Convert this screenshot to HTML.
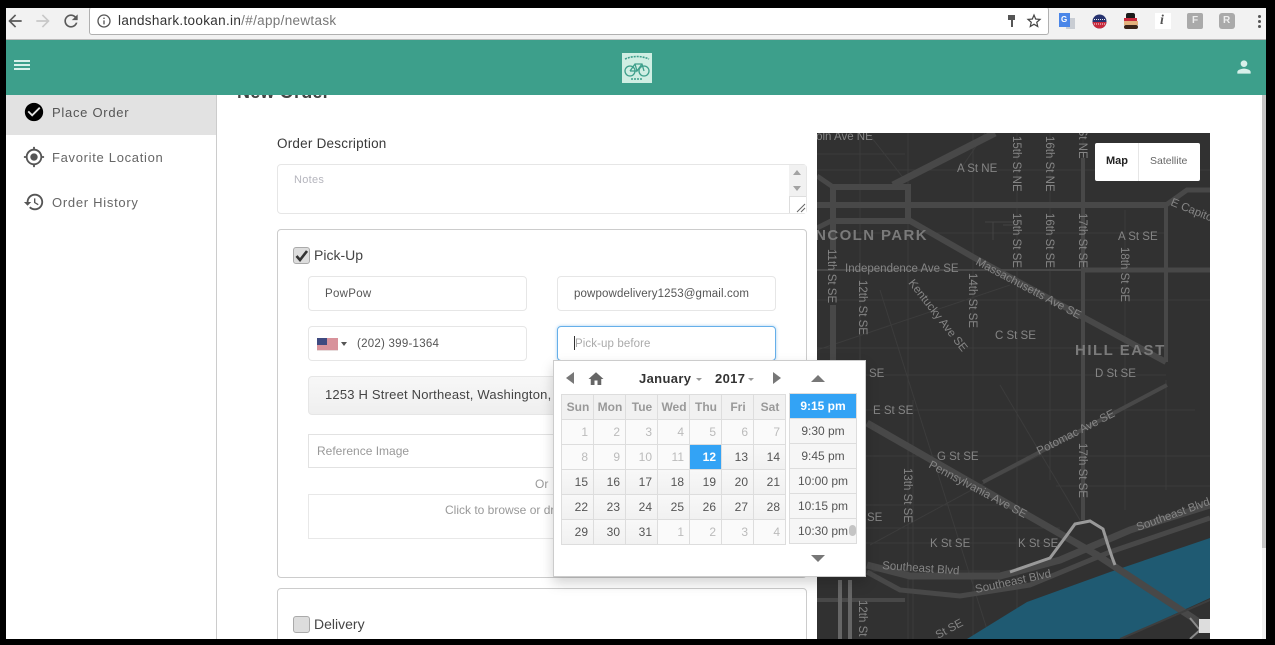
<!DOCTYPE html>
<html><head><meta charset="utf-8"><style>
html,body{margin:0;padding:0;width:1275px;height:645px;overflow:hidden;background:#000;font-family:"Liberation Sans",sans-serif}
.a{position:absolute}
.t{position:absolute;white-space:nowrap}
.box{position:absolute;box-sizing:border-box;border:1px solid #e6e6e6;border-radius:4px;background:#fff}
#cal div.c{position:absolute;box-sizing:border-box;width:33px;height:26px;border:1px solid #ddd;background:linear-gradient(#f8f8f8,#f1f1f1);font-size:12px;line-height:24px;text-align:right;padding-right:5px;color:#555}
#cal div.h{text-align:center;padding:0 0 0 1px;font-weight:bold;color:#999;background:#f1f1f1}
#cal div.o{color:#bbb;background:#fafafa}
#cal div.s{background:#33a3f5;color:#fff;font-weight:bold;border-color:#ddd}
#cal div.m{position:absolute;box-sizing:border-box;left:235px;width:68px;height:26px;border:1px solid #ddd;background:#f6f6f6;font-size:12px;line-height:24px;text-align:center;color:#555}
svg text{font-family:"Liberation Sans",sans-serif;font-size:11.5px;fill:#858585}
</style></head><body>
<div class="a" id="page" style="left:6px;top:8px;width:1260px;height:631px;background:#fff;overflow:hidden">
<div style="position:absolute;left:-6px;top:-8px;width:1275px;height:645px">

<!-- content -->
<div class="t" style="left:237px;top:80px;font-size:18px;line-height:24px;font-weight:bold;color:#444;letter-spacing:.2px">New Order</div>

<!-- sidebar -->
<div class="a" style="left:6px;top:95px;width:210px;height:544px;background:#fff;border-right:1px solid #ccc"></div>
<div class="a" style="left:6px;top:95px;width:210px;height:40px;background:#e2e2e2"></div>
<svg class="a" style="left:23px;top:101px" width="22" height="22" viewBox="0 0 24 24"><path fill="#000" d="M12 2C6.48 2 2 6.48 2 12s4.48 10 10 10 10-4.48 10-10S17.52 2 12 2zm-2 15l-5-5 1.41-1.41L10 14.17l7.59-7.59L19 8l-9 9z"/></svg>
<svg class="a" style="left:23px;top:146px" width="22" height="22" viewBox="0 0 24 24"><path fill="#555" d="M12 8c-2.21 0-4 1.79-4 4s1.79 4 4 4 4-1.79 4-4-1.79-4-4-4zm8.94 3c-.46-4.17-3.77-7.48-7.94-7.94V1h-2v2.06C6.83 3.52 3.52 6.83 3.06 11H1v2h2.06c.46 4.17 3.77 7.48 7.94 7.94V23h2v-2.06c4.17-.46 7.48-3.77 7.94-7.94H23v-2h-2.06zM12 19c-3.87 0-7-3.13-7-7s3.13-7 7-7 7 3.13 7 7-3.13 7-7 7z"/></svg>
<svg class="a" style="left:23px;top:191px" width="22" height="22" viewBox="0 0 24 24"><path fill="#555" d="M13 3c-4.97 0-9 4.03-9 9H1l3.89 3.89.07.14L9 12H6c0-3.87 3.13-7 7-7s7 3.13 7 7-3.13 7-7 7c-1.93 0-3.68-.79-4.94-2.06l-1.42 1.42C8.27 19.99 10.51 21 13 21c4.97 0 9-4.03 9-9s-4.03-9-9-9zm-1 5v5l4.28 2.54.72-1.21-3.5-2.08V8H12z"/></svg>
<div class="t" style="left:52px;top:105px;font-size:13px;line-height:15px;color:#555;letter-spacing:.72px">Place Order</div>
<div class="t" style="left:52px;top:150px;font-size:13px;line-height:15px;color:#666;letter-spacing:.69px">Favorite Location</div>
<div class="t" style="left:52px;top:195px;font-size:13px;line-height:15px;color:#666;letter-spacing:.72px">Order History</div>

<!-- form -->
<div class="t" style="left:277px;top:136px;font-size:13.5px;line-height:15px;color:#3a3a3a;letter-spacing:.22px">Order Description</div>
<div class="box" style="left:277px;top:164px;width:530px;height:50px"></div>
<div class="t" style="left:294px;top:174px;font-size:11px;line-height:13px;color:#b5b5bd;letter-spacing:.3px">Notes</div>
<div class="a" style="left:789px;top:165px;width:17px;height:32px;background:#f1f1f1"></div>
<div class="a" style="left:793px;top:170px;width:0;height:0;border-left:4px solid transparent;border-right:4px solid transparent;border-bottom:5px solid #a3a3a3"></div>
<div class="a" style="left:793px;top:186px;width:0;height:0;border-left:4px solid transparent;border-right:4px solid transparent;border-top:5px solid #a3a3a3"></div>
<div class="a" style="left:789px;top:196px;width:17px;height:17px;box-sizing:border-box;border-left:1px solid #ddd;border-top:1px solid #ddd;background:#fff"></div>
<svg class="a" style="left:796px;top:203px" width="10" height="10"><path d="M1 9L9 1M5 9L9 5" stroke="#666" stroke-width="1" fill="none"/></svg>

<div class="box" style="left:277px;top:229px;width:530px;height:349px;border-color:#ccc"></div>
<div class="box" style="left:277px;top:588px;width:530px;height:70px;border-color:#ccc"></div>

<div class="a" style="left:293px;top:247px;width:17px;height:17px;box-sizing:border-box;border:1px solid #aaa;border-radius:3px;background:#ddd"></div>
<svg class="a" style="left:295px;top:249px" width="13" height="13" viewBox="0 0 13 13"><path d="M1.5 7L5 11L12 2" stroke="#333" stroke-width="2.6" fill="none"/></svg>
<div class="t" style="left:314px;top:247px;font-size:14px;line-height:16px;color:#444">Pick-Up</div>

<div class="box" style="left:308px;top:276px;width:219px;height:35px"></div>
<div class="t" style="left:325px;top:287px;font-size:11.5px;line-height:14px;color:#555;letter-spacing:.3px">PowPow</div>
<div class="box" style="left:557px;top:276px;width:219px;height:35px"></div>
<div class="t" style="left:574px;top:287px;font-size:11.5px;line-height:14px;color:#555;letter-spacing:.13px">powpowdelivery1253@gmail.com</div>

<div class="box" style="left:308px;top:326px;width:219px;height:35px"></div>
<svg class="a" style="left:317px;top:338px" width="21" height="13" viewBox="0 0 21 13"><rect width="21" height="13" fill="#e8dcdc"/><path d="M0 1h21M0 3h21M0 5h21M0 7h21M0 9h21M0 11h21" stroke="#c8485a" stroke-width="1" fill="none"/><rect width="10" height="7" fill="#3f4a80"/></svg>
<div class="a" style="left:341px;top:342px;width:0;height:0;border-left:3px solid transparent;border-right:3px solid transparent;border-top:4px solid #555"></div>
<div class="t" style="left:357px;top:337px;font-size:11.5px;line-height:14px;color:#555;letter-spacing:.25px">(202) 399-1364</div>

<div class="box" style="left:557px;top:326px;width:219px;height:35px;border-color:#66afe9;box-shadow:0 0 3px rgba(102,175,233,.6)"></div>
<div class="a" style="left:574px;top:336px;width:1px;height:14px;background:#333"></div>
<div class="t" style="left:575px;top:337px;font-size:11.5px;line-height:14px;color:#aaa;letter-spacing:.1px">Pick-up before</div>

<div class="box" style="left:308px;top:376px;width:300px;height:39px;background:linear-gradient(#f7f7f7,#efefef)"></div>
<div class="t" style="left:325px;top:387px;font-size:13px;line-height:15px;color:#444;letter-spacing:.2px">1253 H Street Northeast, Washington,</div>

<div class="box" style="left:308px;top:434px;width:468px;height:34px;border-radius:0;border-color:#e2e2e2"></div>
<div class="t" style="left:317px;top:444px;font-size:12px;line-height:14px;color:#999">Reference Image</div>
<div class="t" style="left:535px;top:477px;font-size:12px;line-height:14px;color:#999">Or</div>
<div class="box" style="left:308px;top:494px;width:468px;height:45px;border-radius:0;border-color:#e8e8e8"></div>
<div class="t" style="left:445px;top:503px;font-size:12px;line-height:14px;color:#999">Click to browse or drag</div>

<div class="a" style="left:293px;top:616px;width:17px;height:17px;box-sizing:border-box;border:1px solid #aaa;border-radius:3px;background:#ddd"></div>
<div class="t" style="left:314px;top:616px;font-size:14px;line-height:16px;color:#444">Delivery</div>

<!-- map -->
<svg class="a" style="left:817px;top:133px;background:#313131" width="393" height="506" viewBox="817 133 393 506">
<g stroke="#3c3c3c" stroke-width="1" fill="none">
<path d="M817 154H905M817 170H1210M817 233H1165M817 300H1210M817 348H1166M817 375H1166M817 410H1195M817 456H1210M817 505H1000M817 528H1060M817 543H1060M817 571H1000M1056 486H1210"/>
<path d="M860 133V400M908 133V639M913 400V639M973 133V639M1017 133V640M1050 133V480M1125 210V510M1166 380V490M1083 133V300"/>
<path d="M905 180L868 133M880 290L990 639M985 133L960 170M1000 385L1080 520M870 545L990 480L1040 455M817 350L1010 285"/>
</g>
<path d="M1015 225H1003M993 222V240M1020 222H985" stroke="#444" fill="none"/>
<path d="M967 639L1027 602L1110 572L1210 538V598L1120 639Z" fill="#1f5a72"/>
<g stroke="#484848" fill="none" stroke-linecap="butt">
<path d="M817 205H1166" stroke-width="6"/>
<path d="M833 187H908V221H833Z" stroke-width="6"/>
<path d="M893 185L995 133" stroke-width="7"/>
<path d="M817 176L833 187M817 228L833 220" stroke-width="5"/>
<path d="M905 218L973 257L1083 317L1166 362" stroke-width="6"/>
<path d="M833 221V250M833 305V372" stroke-width="6"/>
<path d="M1083 158V520" stroke-width="4"/>
<path d="M1166 205V362" stroke-width="4"/>
<path d="M1083 270H1210" stroke-width="5"/>
<path d="M817 270H1083" stroke-width="2"/>
<path d="M1166 205L1187 190H1210" stroke-width="5"/>
<path d="M867 423L1097 555L1193 618L1210 630" stroke-width="7"/>
<path d="M983 482L1167 385" stroke-width="4"/>
<path d="M867 565L910 576H1000L1060 560L1130 530L1210 505" stroke-width="7"/>
<path d="M867 572L900 590L960 596L1030 585L1110 552L1210 518" stroke-width="5"/>
<path d="M817 600H905" stroke-width="4"/>
<path d="M840 639V580M850 639V580" stroke-width="4" stroke="#666"/>
<path d="M1120 639L1210 600" stroke-width="2" stroke="#3e3e3e"/>
</g>
<path d="M1010 572L1050 558L1067 535L1075 524L1090 521L1103 529L1108 545L1112 557L1115 565" stroke="#999" stroke-width="3" fill="none"/>
<path d="M1190 618L1200 630L1190 639" stroke="#8a8a8a" stroke-width="2" fill="none"/>
<rect x="1199" y="619" width="11" height="14" fill="#ddd"/>
<text x="795" y="140">Lincoln Ave NE</text>
<text x="957" y="172">A St NE</text>
<text transform="translate(1013 136) rotate(90)">15th St NE</text>
<text transform="translate(1046 136) rotate(90)">16th St NE</text>
<text transform="translate(1079 103) rotate(90)">17th St NE</text>
<text transform="translate(1013 213) rotate(90)">15th St SE</text>
<text transform="translate(1046 213) rotate(90)">16th St SE</text>
<text transform="translate(1079 213) rotate(90)">17th St SE</text>
<text transform="translate(1121 247) rotate(90)">18th St SE</text>
<text transform="translate(828 249) rotate(90)">11th St SE</text>
<text transform="translate(859 280) rotate(90)">12th St SE</text>
<text transform="translate(969 273) rotate(90)">14th St SE</text>
<text transform="translate(1079 443) rotate(90)">17th St SE</text>
<text transform="translate(904 468) rotate(90)">13th St SE</text>
<text transform="translate(859 600) rotate(90)">12th St SE</text>
<text transform="translate(1170 205) rotate(22)">E Capitol</text>
<text x="928" y="240" text-anchor="end" style="font-size:15px;letter-spacing:1.4px;font-weight:bold;fill:#7a7a7a">LINCOLN PARK</text>
<text x="1118" y="240">A St SE</text>
<text x="845" y="272">Independence Ave SE</text>
<text transform="translate(975 264) rotate(28)">Massachusetts Ave SE</text>
<text transform="translate(908 283) rotate(52)">Kentucky Ave SE</text>
<text x="995" y="339">C St SE</text>
<text x="1075" y="355" style="font-size:15px;letter-spacing:1.5px;font-weight:bold;fill:#7a7a7a">HILL EAST</text>
<text x="1095" y="377">D St SE</text>
<text x="869" y="377">SE</text>
<text x="873" y="414">E St SE</text>
<text x="937" y="460">G St SE</text>
<text transform="translate(928 467) rotate(28)">Pennsylvania Ave SE</text>
<text transform="translate(1039 455) rotate(-27)">Potomac Ave SE</text>
<text x="867" y="521">SE</text>
<text x="930" y="547">K St SE</text>
<text x="1018" y="547">K St SE</text>
<text transform="translate(882 569) rotate(4)">Southeast Blvd</text>
<text transform="translate(976 593) rotate(-12)">Southeast Blvd</text>
<text transform="translate(1138 531) rotate(-20)">Southeast Blvd</text>
<text transform="translate(938 639) rotate(-28)">St SE</text>
</svg>
<div class="a" style="left:1095px;top:143px;width:105px;height:38px;background:#fff;border-radius:2px"></div>
<div class="a" style="left:1138px;top:143px;width:1px;height:38px;background:#e6e6e6"></div>
<div class="t" style="left:1106px;top:155px;font-size:11px;line-height:13px;font-weight:bold;color:#222">Map</div>
<div class="t" style="left:1150px;top:155px;font-size:10.5px;line-height:13px;color:#666">Satellite</div>

<!-- scrollbar -->
<div class="a" style="left:1262px;top:95px;width:4px;height:544px;background:#f0f0f0"></div>
<div class="a" style="left:1262px;top:95px;width:4px;height:453px;background:#c4c4c4"></div>

<!-- date picker -->
<div class="a" id="cal" style="left:553px;top:360px;width:313px;height:217px;box-sizing:border-box;border:1px solid #ccc;background:#fff;box-shadow:0 6px 12px rgba(0,0,0,.175)">
<div class="a" style="left:12px;top:11px;width:0;height:0;border-top:6.5px solid transparent;border-bottom:6.5px solid transparent;border-right:8px solid #777"></div>
<svg class="a" style="left:33px;top:9px" width="18" height="18" viewBox="0 0 24 24"><path fill="#666" d="M10 20v-6h4v6h5v-8h3L12 3 2 12h3v8z"/></svg>
<div class="t" style="left:85px;top:10px;font-size:13px;line-height:16px;font-weight:bold;color:#333;letter-spacing:.35px">January</div>
<div class="a" style="left:142px;top:17px;width:0;height:0;border-left:3px solid transparent;border-right:3px solid transparent;border-top:3px solid #999"></div>
<div class="t" style="left:161px;top:10px;font-size:13px;line-height:16px;font-weight:bold;color:#333;letter-spacing:.35px">2017</div>
<div class="a" style="left:194px;top:17px;width:0;height:0;border-left:3px solid transparent;border-right:3px solid transparent;border-top:3px solid #999"></div>
<div class="a" style="left:219px;top:11px;width:0;height:0;border-top:6.5px solid transparent;border-bottom:6.5px solid transparent;border-left:8px solid #777"></div>
<div class="a" style="left:257px;top:14px;width:0;height:0;border-left:7px solid transparent;border-right:7px solid transparent;border-bottom:7px solid #777"></div>
<div class="a" style="left:257px;top:194px;width:0;height:0;border-left:7px solid transparent;border-right:7px solid transparent;border-top:7px solid #777"></div>

<div class="c h" style="left:7px;top:33px">Sun</div><div class="c h" style="left:39px;top:33px">Mon</div><div class="c h" style="left:71px;top:33px">Tue</div><div class="c h" style="left:103px;top:33px">Wed</div><div class="c h" style="left:135px;top:33px">Thu</div><div class="c h" style="left:167px;top:33px">Fri</div><div class="c h" style="left:199px;top:33px">Sat</div>
<div class="c o" style="left:7px;top:58px">1</div><div class="c o" style="left:39px;top:58px">2</div><div class="c o" style="left:71px;top:58px">3</div><div class="c o" style="left:103px;top:58px">4</div><div class="c o" style="left:135px;top:58px">5</div><div class="c o" style="left:167px;top:58px">6</div><div class="c o" style="left:199px;top:58px">7</div>
<div class="c o" style="left:7px;top:83px">8</div><div class="c o" style="left:39px;top:83px">9</div><div class="c o" style="left:71px;top:83px">10</div><div class="c o" style="left:103px;top:83px">11</div><div class="c s" style="left:135px;top:83px">12</div><div class="c" style="left:167px;top:83px">13</div><div class="c" style="left:199px;top:83px">14</div>
<div class="c" style="left:7px;top:108px">15</div><div class="c" style="left:39px;top:108px">16</div><div class="c" style="left:71px;top:108px">17</div><div class="c" style="left:103px;top:108px">18</div><div class="c" style="left:135px;top:108px">19</div><div class="c" style="left:167px;top:108px">20</div><div class="c" style="left:199px;top:108px">21</div>
<div class="c" style="left:7px;top:133px">22</div><div class="c" style="left:39px;top:133px">23</div><div class="c" style="left:71px;top:133px">24</div><div class="c" style="left:103px;top:133px">25</div><div class="c" style="left:135px;top:133px">26</div><div class="c" style="left:167px;top:133px">27</div><div class="c" style="left:199px;top:133px">28</div>
<div class="c" style="left:7px;top:158px">29</div><div class="c" style="left:39px;top:158px">30</div><div class="c" style="left:71px;top:158px">31</div><div class="c o" style="left:103px;top:158px">1</div><div class="c o" style="left:135px;top:158px">2</div><div class="c o" style="left:167px;top:158px">3</div><div class="c o" style="left:199px;top:158px">4</div>

<div class="m" style="top:32px;background:#33a3f5;color:#fff;font-weight:bold;border-color:#ddd">9:15 pm</div>
<div class="m" style="top:57px">9:30 pm</div>
<div class="m" style="top:82px">9:45 pm</div>
<div class="m" style="top:107px">10:00 pm</div>
<div class="m" style="top:132px">10:15 pm</div>
<div class="m" style="top:157px">10:30 pm</div>
<div class="a" style="left:295px;top:164px;width:7px;height:11px;border-radius:4px;background:#c4c4c4"></div>
</div>

<!-- header -->
<div class="a" style="left:6px;top:40px;width:1260px;height:55px;background:#3d9f8b"></div>
<div class="a" style="left:14px;top:60px;width:16px;height:2px;background:#d8f0ea;box-shadow:0 4px 0 #d8f0ea,0 8px 0 #d8f0ea"></div>
<svg class="a" style="left:622px;top:53px" width="30" height="30" viewBox="0 0 30 30"><rect width="30" height="30" fill="#cfeee3"/><g fill="none" stroke="#3d9f8b" stroke-width="1.3"><circle cx="8" cy="18" r="5"/><circle cx="22" cy="18" r="5"/><path d="M8 18L13 11H20L22 18M13 11L15 18L20 11M15 18H8"/></g><path d="M3 6Q15 1 27 6M9 26H21" stroke="#3d9f8b" stroke-width="1.6" stroke-dasharray="2 1" fill="none"/></svg>
<svg class="a" style="left:1234px;top:57px" width="20" height="20" viewBox="0 0 24 24"><path fill="#d8f0ea" d="M12 12c2.21 0 4-1.79 4-4s-1.79-4-4-4-4 1.79-4 4 1.79 4 4 4zm0 2c-2.67 0-8 1.34-8 4v2h16v-2c0-2.66-5.33-4-8-4z"/></svg>

<!-- browser chrome -->
<div class="a" style="left:6px;top:8px;width:1260px;height:31px;background:#f2f2f2;border-bottom:1px solid #bbb"></div>
<svg class="a" style="left:5px;top:11px" width="20" height="20" viewBox="0 0 24 24"><path fill="#5a5a5a" d="M20 11H7.83l5.59-5.59L12 4l-8 8 8 8 1.41-1.41L7.83 13H20v-2z"/></svg>
<svg class="a" style="left:33px;top:11px" width="20" height="20" viewBox="0 0 24 24"><path fill="#c8c8c8" d="M4 11h12.17l-5.59-5.59L12 4l8 8-8 8-1.41-1.41L16.17 13H4v-2z"/></svg>
<svg class="a" style="left:61px;top:11px" width="20" height="20" viewBox="0 0 24 24"><path fill="#5a5a5a" d="M17.65 6.35C16.2 4.9 14.21 4 12 4c-4.42 0-7.99 3.58-7.99 8s3.57 8 7.99 8c3.73 0 6.84-2.55 7.73-6h-2.08c-.82 2.33-3.04 4-5.65 4-3.31 0-6-2.69-6-6s2.69-6 6-6c1.66 0 3.14.69 4.22 1.78L13 11h7V4l-2.35 2.35z"/></svg>
<div class="a" style="left:89px;top:7px;width:960px;height:28px;box-sizing:border-box;border:1px solid #b0b0b0;border-top:0;border-radius:3px;background:#fff"></div>
<svg class="a" style="left:96px;top:13px" width="16" height="16" viewBox="0 0 24 24"><path fill="#555" d="M11 7h2v2h-2zm0 4h2v6h-2zm1-9C6.48 2 2 6.48 2 12s4.48 10 10 10 10-4.48 10-10S17.52 2 12 2zm0 18c-4.41 0-8-3.59-8-8s3.59-8 8-8 8 3.59 8 8-3.59 8-8 8z"/></svg>
<div class="t" style="left:118px;top:13px;font-size:13.5px;line-height:16px;color:#333;letter-spacing:.32px">landshark.tookan.in<span style="color:#777">/#/app/newtask</span></div>
<svg class="a" style="left:1007px;top:14px" width="10" height="15" viewBox="0 0 10 15"><path fill="#555" d="M1 1h7v5H6v7H4V6H1z"/></svg>
<svg class="a" style="left:1025px;top:12px" width="18" height="18" viewBox="0 0 24 24"><path fill="#444" d="M22 9.24l-7.19-.62L12 2 9.19 8.63 2 9.24l5.46 4.73L5.82 21 12 17.27 18.18 21l-1.63-7.03L22 9.24zM12 15.4l-3.76 2.27 1-4.28-3.32-2.88 4.38-.38L12 6.1l1.71 4.04 4.38.38-3.32 2.88 1 4.28L12 15.4z"/></svg>
<div class="a" style="left:1066px;top:18px;width:9px;height:11px;background:#c9cdd3"></div>
<div class="a" style="left:1059px;top:13px;width:11px;height:14px;background:#4a86e8"></div>
<div class="t" style="left:1061px;top:14px;font-size:8px;line-height:12px;font-weight:bold;color:#fff">G</div>
<svg class="a" style="left:1092px;top:14px" width="15" height="15" viewBox="0 0 15 15"><defs><clipPath id="cc"><circle cx="7.5" cy="7.5" r="7"/></clipPath></defs><g clip-path="url(#cc)"><rect width="15" height="15" fill="#27336f"/><rect y="8" width="15" height="7" fill="#c8283c"/><path d="M2 5.5h11M2 10h11" stroke="#eee" stroke-width="1" stroke-dasharray="1 1"/></g></svg>
<div class="a" style="left:1126px;top:13px;width:9px;height:6px;background:#1a1a1a;border-radius:2px 2px 0 0"></div>
<div class="a" style="left:1124px;top:18px;width:13px;height:3px;background:#c8283c"></div>
<div class="a" style="left:1124px;top:21px;width:14px;height:4px;background:#e5b27c"></div>
<div class="a" style="left:1124px;top:25px;width:14px;height:4px;background:#3a2418;border-radius:3px"></div>
<div class="a" style="left:1155px;top:13px;width:16px;height:16px;background:#fff"></div>
<div class="t" style="left:1160px;top:13px;font-family:'Liberation Serif',serif;font-size:14px;line-height:16px;font-style:italic;font-weight:bold;color:#555">i</div>
<div class="a" style="left:1187px;top:13px;width:16px;height:16px;background:#aaa;border-radius:2px"></div>
<div class="t" style="left:1192px;top:15px;font-size:10px;line-height:12px;font-weight:bold;color:#eee">F</div>
<div class="a" style="left:1219px;top:13px;width:16px;height:16px;background:#aaa;border-radius:3px"></div>
<div class="t" style="left:1223px;top:15px;font-size:10px;line-height:12px;font-weight:bold;color:#eee">R</div>
<div class="a" style="left:1258px;top:15px;width:3px;height:3px;border-radius:2px;background:#555;box-shadow:0 5px 0 #555,0 10px 0 #555"></div>
</div>
</div>
</body></html>
